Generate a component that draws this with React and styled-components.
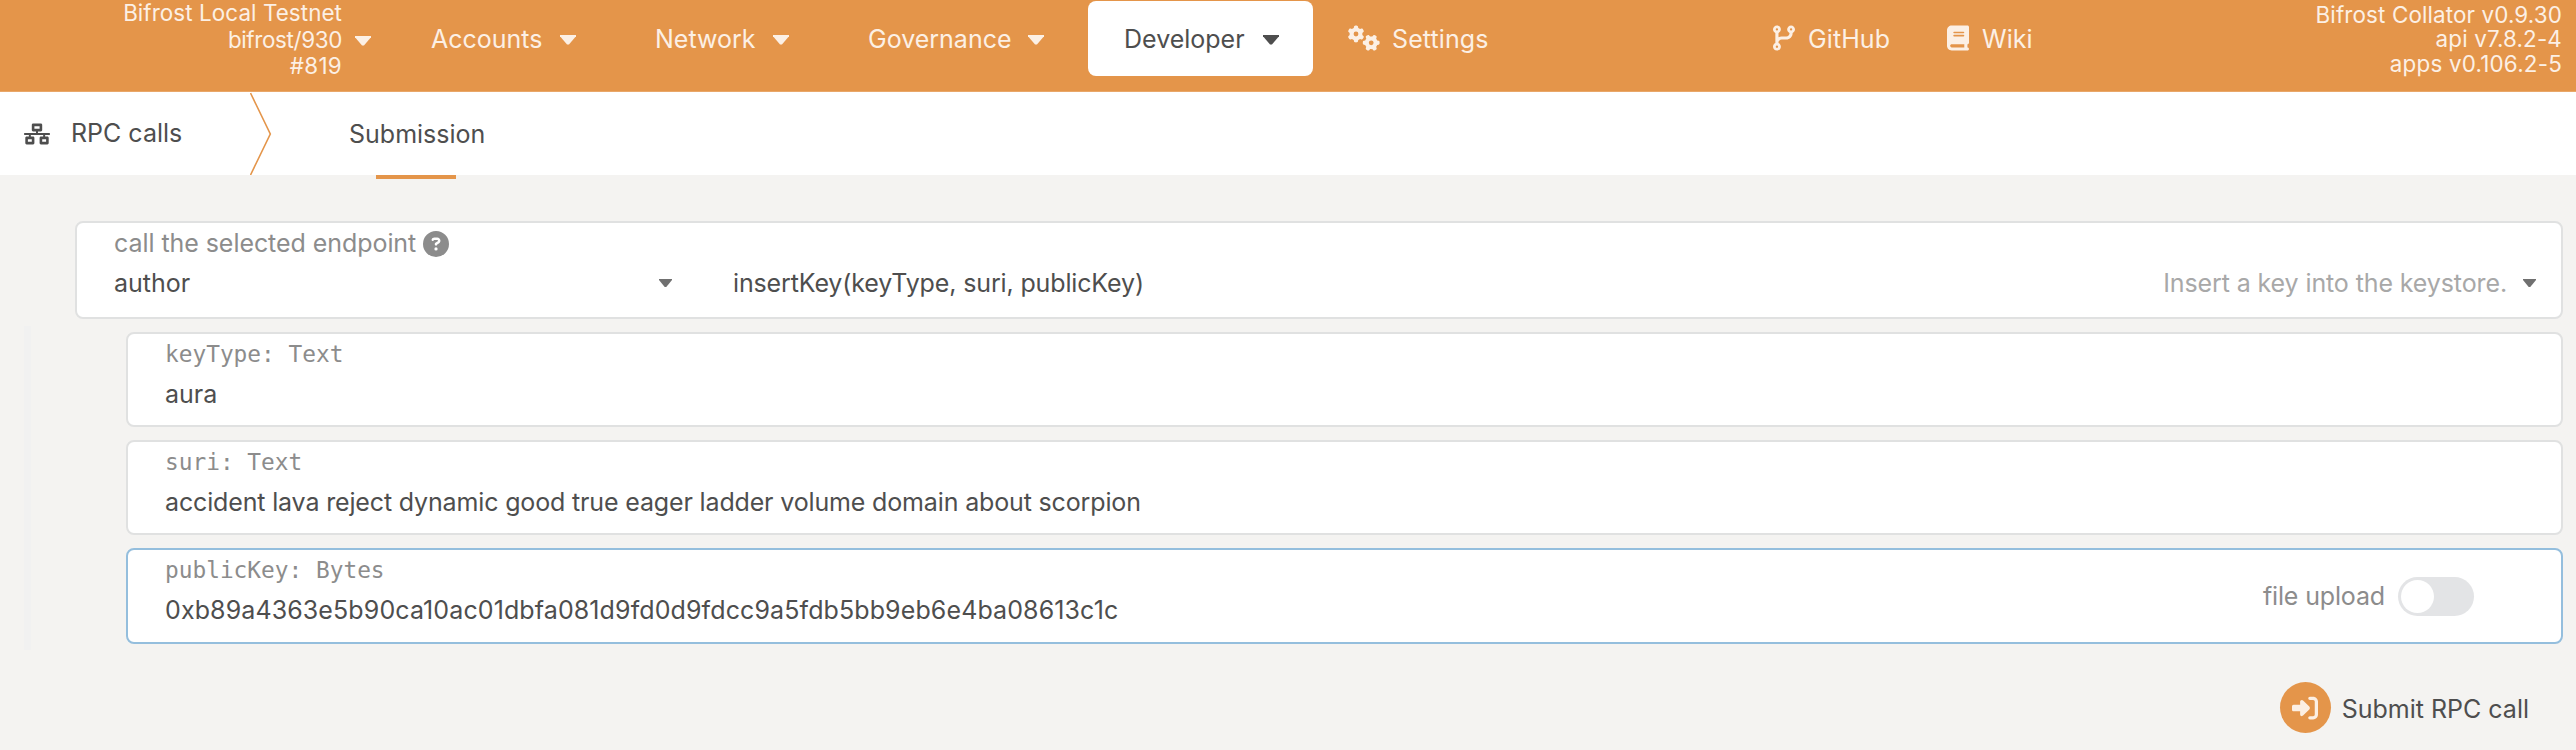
import React from 'react';
import styled, { createGlobalStyle } from 'styled-components';
import { FaNetworkWired } from 'react-icons/fa';
import { FaRightToBracket, FaGears, FaCodeBranch, FaBook, FaCircleQuestion } from 'react-icons/fa6';

const Global = createGlobalStyle`
  * { box-sizing: border-box; }
  body {
    margin: 0;
    background: #f4f3f1;
    color: #4e4e4e;
    font-family: Inter, "Liberation Sans", sans-serif;
    font-size: 25px;
    line-height: 30px;
    white-space: nowrap;
    overflow: hidden;
  }
`;

const Page = styled.div`
  width: 2576px;
  height: 750px;
  display: flex;
  flex-direction: column;
`;

const Header = styled.header`
  display: flex;
  height: 92px;
  background: #e4954a;
  border-bottom: 1px solid #e9a769;
  color: #fcf0e5;
`;

const Text = styled.span`
  letter-spacing: ${(p) => p.$ls || 0}px;
`;

const Chain = styled.div`
  display: flex;
  width: 371px;
  justify-content: flex-end;
  gap: 13px;
`;

const Lines = styled.div`
  display: flex;
  flex-direction: column;
  align-items: flex-end;
  font-size: 22.4px;
  line-height: ${(p) => p.$pitch}px;
  padding-top: ${(p) => p.$top}px;
`;

const Caret = styled.i`
  display: block;
  width: ${(p) => (p.$small ? 13 : 16)}px;
  height: ${(p) => (p.$small ? 8 : 9.5)}px;
  background: ${(p) => (p.$small ? '#707070' : 'currentColor')};
  clip-path: polygon(0 0, 100% 0, 100% 12%, 56% 100%, 44% 100%, 0 12%);
  margin-top: ${(p) => p.$top || 0}px;
`;

const Nav = styled.nav`
  display: flex;
  margin-left: 29px;
`;

const NavItem = styled.a`
  display: flex;
  justify-content: space-between;
  width: ${(p) => p.$w}px;
  height: 75px;
  margin: 1px ${(p) => p.$gap || 0}px 0 0;
  padding: 23px 34px 0 ${(p) => p.$pl || 31}px;
  border-radius: 8px;
  background: ${(p) => (p.$active ? '#fff' : 'transparent')};
  color: ${(p) => (p.$active ? '#4e4e4e' : 'inherit')};
`;

const IconLink = styled.a`
  display: flex;
  width: ${(p) => p.$w}px;
  padding: 24px 0 0 ${(p) => p.$pl || 0}px;
  svg {
    width: ${(p) => p.$iw}px;
    height: 26px;
    margin: 1px ${(p) => p.$gap}px 0 0;
  }
`;

const Versions = styled.div`
  margin-left: auto;
  padding-right: 14px;
`;

const SubBar = styled.div`
  display: flex;
  height: 83px;
  background: #fff;
`;

const Title = styled.div`
  display: flex;
  width: 250px;
  padding: 26px 0 0 24px;
  svg {
    width: 26px;
    height: 22px;
    margin: 5px 21px 0 0;
  }
`;

const Chevron = styled.svg`
  width: 22px;
  height: 83px;
`;

const Tab = styled.div`
  display: flex;
  flex-direction: column;
  margin: 27px 0 -4px 77px;
  &::after {
    content: '';
    width: 80px;
    height: 4px;
    margin: auto 0 0 27px;
    background: #e4954a;
  }
`;

const Main = styled.main`
  display: flex;
  flex-direction: column;
  padding: 46px 13px 0 75px;
`;

const Card = styled.section`
  display: flex;
  justify-content: space-between;
  height: ${(p) => p.$h}px;
  border: 2px solid ${(p) => (p.$focus ? '#94bedd' : '#e0e1e1')};
  border-radius: 8px;
  background: #fff;
  padding-left: 37px;
`;

const Params = styled.div`
  display: flex;
  flex-direction: column;
  gap: 12.5px;
  margin: 6.5px 0 0 -51px;
  padding: 6px 0 6px 95px;
  border-left: 7px solid #f1f1f1;
`;

const Column = styled.div`
  display: flex;
  flex-direction: column;
  width: ${(p) => (p.$w ? `${p.$w}px` : 'auto')};
`;

const Label = styled.div`
  display: flex;
  height: 30px;
  margin-top: 5px;
  color: #8c8c8c;
  svg {
    width: 26px;
    height: 26px;
    margin: 3px 0 0 7px;
  }
`;

const MonoLabel = styled(Label)`
  margin-top: 5px;
  font-family: "DejaVu Sans Mono", monospace;
  font-size: 22.8px;
`;

const Value = styled.div`
  display: flex;
  align-items: center;
  justify-content: space-between;
  margin-top: 10px;
  height: 30px;
`;

const Method = styled(Value)`
  flex: 1;
  align-self: flex-start;
  margin: 45px 25px 0 61px;
`;

const Hint = styled(Text)`
  margin-left: auto;
  margin-right: 16px;
  color: #a8a8a8;
`;

const Upload = styled.div`
  display: flex;
  margin-top: 27px;
  margin-right: 87px;
  gap: 13px;
  color: #8c8c8c;
`;

const UploadText = styled(Text)`
  padding-top: 4px;
`;

const Toggle = styled.div`
  width: 76px;
  height: 39px;
  padding: 3px;
  border-radius: 20px;
  background: #e3e4e6;
  &::before {
    content: '';
    display: block;
    width: 33px;
    height: 33px;
    border-radius: 50%;
    background: #fff;
  }
`;

const Submit = styled.button`
  display: flex;
  align-items: center;
  align-self: flex-end;
  margin: 32.5px 34px 0 0;
  padding: 0;
  gap: 11px;
  border: 0;
  background: none;
  color: inherit;
  font: inherit;
`;

const SubmitText = styled(Text)`
  padding-top: 2px;
`;

const Disc = styled.span`
  display: flex;
  align-items: center;
  justify-content: center;
  width: 51px;
  height: 51px;
  border-radius: 50%;
  background: #e4954a;
  color: #fcefe3;
  svg { width: 26px; height: 26px; }
`;

export default function App() {
  return (
    <Page>
      <Global />
      <Header>
        <Chain>
          <Lines $pitch={26.5} $top={-1}>
            <Text $ls={0.08}>Bifrost Local Testnet</Text>
            <Text $ls={-0.35}>bifrost/930</Text>
            <Text $ls={0.3}>#819</Text>
          </Lines>
          <Caret $top={36} />
        </Chain>
        <Nav>
          <NavItem $w={210} $gap={14}><Text>Accounts</Text><Caret $top={11} /></NavItem>
          <NavItem $w={199} $gap={14}><Text>Network</Text><Caret $top={11} /></NavItem>
          <NavItem $w={241} $gap={10}><Text>Governance</Text><Caret $top={11} /></NavItem>
          <NavItem $w={225} $pl={36} $active><Text>Developer</Text><Caret $top={11} /></NavItem>
        </Nav>
        <IconLink $w={460} $pl={35} $iw={32} $gap={12}><FaGears /><Text $ls={0.1}>Settings</Text></IconLink>
        <IconLink $w={174} $iw={22} $gap={13}><FaCodeBranch /><Text $ls={0.1}>GitHub</Text></IconLink>
        <IconLink $w={100} $iw={22} $gap={13}><FaBook /><Text>Wiki</Text></IconLink>
        <Versions>
          <Lines $pitch={24.4} $top={3}>
            <Text $ls={0.13}>Bifrost Collator v0.9.30</Text>
            <Text $ls={0.15}>api v7.8.2-4</Text>
            <Text $ls={0.2}>apps v0.106.2-5</Text>
          </Lines>
        </Versions>
      </Header>
      <SubBar>
        <Title><FaNetworkWired /><Text>RPC calls</Text></Title>
        <Chevron viewBox="0 0 22 83" fill="none" stroke="#e4954a" strokeWidth="1.6">
          <path d="M0.5 1 L20.3 42 L0.5 83" />
        </Chevron>
        <Tab><Text>Submission</Text></Tab>
      </SubBar>
      <Main>
        <Card $h={98}>
          <Column $w={558}>
            <Label><Text $ls={-0.06}>call the selected endpoint</Text><FaCircleQuestion /></Label>
            <Value><Text>author</Text><Caret $small /></Value>
          </Column>
          <Method>
            <Text $ls={-0.14}>insertKey(keyType, suri, publicKey)</Text>
            <Hint $ls={-0.11}>Insert a key into the keystore.</Hint>
            <Caret $small />
          </Method>
        </Card>
        <Params>
          <Card $h={95.7}>
            <Column>
              <MonoLabel>keyType: Text</MonoLabel>
              <Value><Text>aura</Text></Value>
            </Column>
          </Card>
          <Card $h={95.7}>
            <Column>
              <MonoLabel>suri: Text</MonoLabel>
              <Value><Text $ls={-0.15}>accident lava reject dynamic good true eager ladder volume domain about scorpion</Text></Value>
            </Column>
          </Card>
          <Card $h={95.7} $focus>
            <Column>
              <MonoLabel>publicKey: Bytes</MonoLabel>
              <Value><Text $ls={0.11}>0xb89a4363e5b90ca10ac01dbfa081d9fd0d9fdcc9a5fdb5bb9eb6e4ba08613c1c</Text></Value>
            </Column>
            <Upload><UploadText $ls={-0.15}>file upload</UploadText><Toggle /></Upload>
          </Card>
        </Params>
        <Submit><Disc><FaRightToBracket /></Disc><SubmitText>Submit RPC call</SubmitText></Submit>
      </Main>
    </Page>
  );
}
